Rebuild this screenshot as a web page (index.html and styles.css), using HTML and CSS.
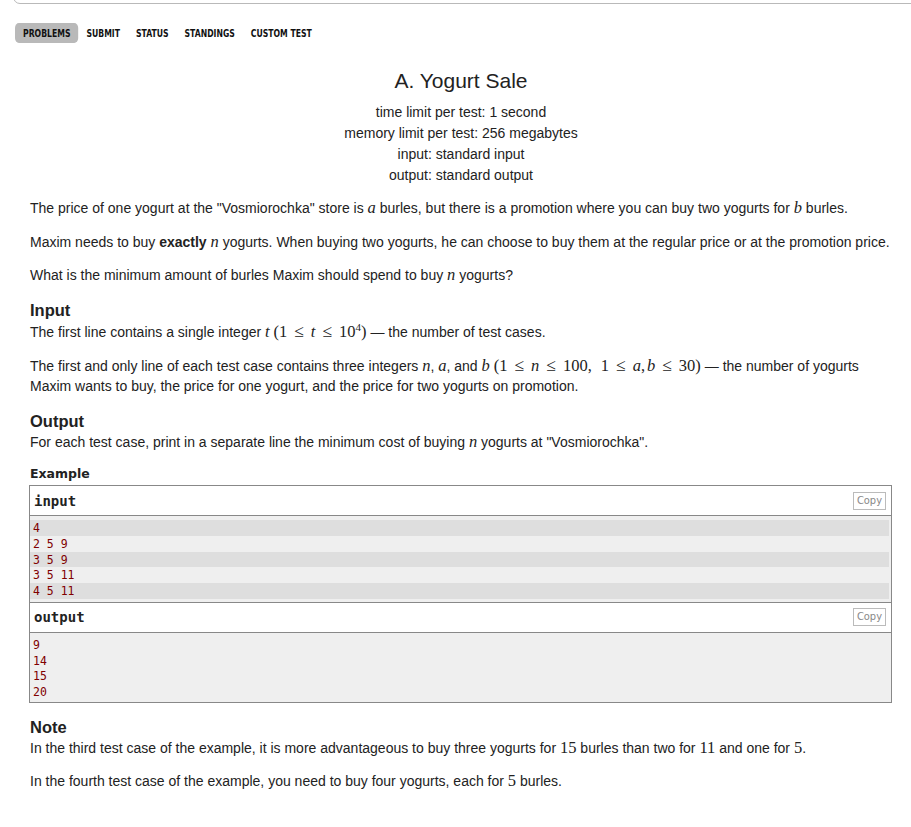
FILE: index.html
```html
<!DOCTYPE html>
<html>
<head>
<meta charset="utf-8">
<link rel="stylesheet" href="styles.css">
</head>
<body>
<div class="topbox"></div>
<nav class="menu">
  <a class="item active">PROBLEMS</a>
  <a class="item">SUBMIT</a>
  <a class="item">STATUS</a>
  <a class="item">STANDINGS</a>
  <a class="item">CUSTOM TEST</a>
</nav>
<main class="statement">
  <div class="header">
    <div class="title">A. Yogurt Sale</div>
    <div class="limit">time limit per test: 1 second</div>
    <div class="limit">memory limit per test: 256 megabytes</div>
    <div class="limit">input: standard input</div>
    <div class="limit">output: standard output</div>
  </div>
  <div class="legend">
    <p>The price of one yogurt at the "Vosmiorochka" store is <span class="mi">a</span> burles, but there is a promotion where you can buy two yogurts for <span class="mi">b</span> burles.</p>
    <p>Maxim needs to buy <b>exactly</b> <span class="mi">n</span> yogurts. When buying two yogurts, he can choose to buy them at the regular price or at the promotion price.</p>
    <p>What is the minimum amount of burles Maxim should spend to buy <span class="mi">n</span> yogurts?</p>
  </div>
  <div class="section">
    <div class="section-title">Input</div>
    <p>The first line contains a single integer <span class="mi">t</span> <span class="mn">(1<span class="rel">≤</span><i>t</i><span class="rel">≤</span>10<sup>4</sup>)</span> — the number of test cases.</p>
    <p>The first and only line of each test case contains three integers <span class="mi">n</span>, <span class="mi">a</span>, and <span class="mi">b</span> <span class="mn">(1<span class="rel">≤</span><i>n</i><span class="rel">≤</span>100<span class="comma wide">,</span>1<span class="rel">≤</span><i>a</i><span class="comma">,</span><i>b</i><span class="rel">≤</span>30)</span> — the number of yogurts Maxim wants to buy, the price for one yogurt, and the price for two yogurts on promotion.</p>
  </div>
  <div class="section">
    <div class="section-title">Output</div>
    <p>For each test case, print in a separate line the minimum cost of buying <span class="mi">n</span> yogurts at "Vosmiorochka".</p>
  </div>
  <div class="sample">
    <div class="sample-title">Example</div>
    <div class="sample-test">
      <div class="io-title"><span>input</span><span class="copy">Copy</span></div>
      <div class="pre input-pre">
        <div class="row odd">4</div>
        <div class="row">2 5 9</div>
        <div class="row odd">3 5 9</div>
        <div class="row">3 5 11</div>
        <div class="row odd">4 5 11</div>
      </div>
      <div class="io-title"><span>output</span><span class="copy">Copy</span></div>
      <div class="pre output-pre">
        <div class="row">9</div>
        <div class="row">14</div>
        <div class="row">15</div>
        <div class="row">20</div>
      </div>
    </div>
  </div>
  <div class="section note">
    <div class="section-title">Note</div>
    <p>In the third test case of the example, it is more advantageous to buy three yogurts for <span class="mn">15</span> burles than two for <span class="mn">11</span> and one for <span class="mn">5</span>.</p>
    <p>In the fourth test case of the example, you need to buy four yogurts, each for <span class="mn">5</span> burles.</p>
  </div>
</main>
</body>
</html>
```
FILE: styles.css
```css
body {
  margin: 0;
  font-family: "Liberation Sans", Arial, sans-serif;
  font-size: 14px;
  color: #222;
  background: #fff;
  overflow: hidden;
}

.topbox {
  height: 12px;
  margin: -10px -20px 0 13px;
  border: 1px solid #b9b9b9;
  border-radius: 7px;
}

.menu {
  display: flex;
  margin: 19px 0 0 15px;
  transform: scaleX(0.78);
  transform-origin: left center;
}

.menu .item {
  display: block;
  padding: 0 10.25px;
  height: 20px;
  line-height: 21px;
  font-family: "DejaVu Sans Condensed", "Liberation Sans", sans-serif;
  font-weight: bold;
  font-size: 11px;
  color: #111;
}

.menu .item.active {
  background: #b9b9b9;
  border-radius: 5px;
}

.statement {
  margin: 24px 19px 0 30px;
}

.header {
  text-align: center;
  margin-bottom: 12px;
}

.title {
  font-size: 21px;
  line-height: 28px;
  margin-bottom: 7px;
}

.limit {
  line-height: 21px;
}

p {
  margin: 0 0 13.5px;
  line-height: 20px;
}

.mi {
  font-family: "Liberation Serif", "DejaVu Serif", serif;
  font-style: italic;
  font-size: 16.5px;
}

.mn {
  font-family: "Liberation Serif", "DejaVu Serif", serif;
  font-size: 16.5px;
}

.mn i {
  font-style: italic;
}

.rel {
  margin: 0 7px;
  font-size: 17.5px;
}

.comma {
  margin-right: 2px;
}

.comma.wide {
  margin-right: 9px;
}

.mn sup {
  font-size: 11px;
  line-height: 0;
}

.section {
  margin-top: 10px;
}

.section-title {
  font-size: 16.5px;
  font-weight: bold;
  line-height: 22px;
}

.sample {
  margin-top: 14.5px;
}

.sample-title {
  font-family: "DejaVu Sans", Verdana, sans-serif;
  font-weight: bold;
  font-size: 12.5px;
  line-height: 16px;
  margin: 0 0 3px 0;
  color: #222;
}

.sample-test {
  border: 1px solid #888;
  margin-left: -1px;
}

.io-title {
  display: flex;
  justify-content: space-between;
  align-items: center;
  height: 29px;
  padding: 0 5px 0 4px;
  font-family: "DejaVu Sans Mono", monospace;
  font-weight: bold;
  font-size: 14px;
  color: #222;
  border-bottom: 1px solid #888;
}

.pre + .io-title {
  border-top: 1px solid #888;
}

.copy {
  box-sizing: border-box;
  height: 18px;
  font-family: "DejaVu Sans Condensed", "Liberation Sans", sans-serif;
  font-weight: normal;
  font-size: 11px;
  color: #888;
  border: 1px solid #bbb;
  padding: 0 3px;
  line-height: 16px;
}

.pre {
  background: #efefef;
  font-family: "DejaVu Sans Mono", monospace;
  font-size: 11.5px;
  color: #800000;
}

.input-pre {
  padding: 4px 2px 3px 0;
}

.output-pre {
  padding: 4px 2px 2px 0;
}

.row {
  height: 15.75px;
  line-height: 16px;
  padding-left: 3px;
}

.row.odd {
  background: #dedede;
}

.note {
  margin-top: 13px;
}
```
